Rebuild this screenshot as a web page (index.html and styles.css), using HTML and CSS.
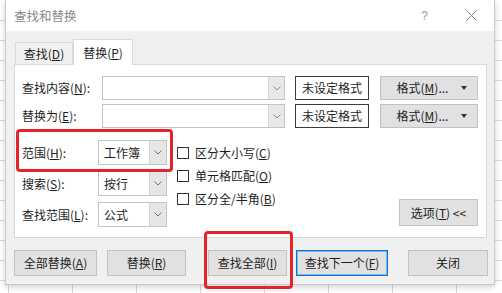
FILE: index.html
```html
<!DOCTYPE html>
<html lang="zh-CN">
<head>
<meta charset="utf-8">
<title>查找和替换</title>
<link rel="stylesheet" href="styles.css">
</head>
<body>
<div class="screen">
  <div class="dialog">
    <div class="titlebar">
      <span class="title">查找和替换</span>
      <span class="help">?</span>
      <span class="close"><svg width="11" height="11" viewBox="0 0 11 11"><path d="M0.5 0.5L10.5 10.5M10.5 0.5L0.5 10.5" stroke="#7a7a7a" stroke-width="1" fill="none"/></svg></span>
    </div>
    <div class="body">
      <div class="tabs">
        <div class="tab">查找(<u>D</u>)</div>
        <div class="tab active">替换(<u>P</u>)</div>
      </div>
      <div class="panel">
        <div class="row">
          <span class="lbl wide">查找内容(<u>N</u>):</span>
          <div class="combo"><span class="field"></span><span class="drop"><svg width="8" height="5" viewBox="0 0 8 5"><polyline points="0.5,0.5 4,4 7.5,0.5" stroke="#8a8a8a" fill="none"/></svg></span></div>
          <div class="fmtbox">未设定格式</div>
          <div class="btn fmt">格式(<u>M</u>)...<span class="tri"></span></div>
        </div>
        <div class="row">
          <span class="lbl wide">替换为(<u>E</u>):</span>
          <div class="combo"><span class="field"></span><span class="drop"><svg width="8" height="5" viewBox="0 0 8 5"><polyline points="0.5,0.5 4,4 7.5,0.5" stroke="#8a8a8a" fill="none"/></svg></span></div>
          <div class="fmtbox">未设定格式</div>
          <div class="btn fmt">格式(<u>M</u>)...<span class="tri"></span></div>
        </div>
        <div class="options">
          <div class="selcol">
            <div class="srow">
              <span class="lbl">范围(<u>H</u>):</span>
              <div class="select"><span class="val">工作簿</span><span class="drop"><svg width="8" height="5" viewBox="0 0 8 5"><polyline points="0.5,0.5 4,4 7.5,0.5" stroke="#707070" fill="none"/></svg></span></div>
            </div>
            <div class="srow">
              <span class="lbl">搜索(<u>S</u>):</span>
              <div class="select"><span class="val">按行</span><span class="drop"><svg width="8" height="5" viewBox="0 0 8 5"><polyline points="0.5,0.5 4,4 7.5,0.5" stroke="#707070" fill="none"/></svg></span></div>
            </div>
            <div class="srow">
              <span class="lbl">查找范围(<u>L</u>):</span>
              <div class="select"><span class="val">公式</span><span class="drop"><svg width="8" height="5" viewBox="0 0 8 5"><polyline points="0.5,0.5 4,4 7.5,0.5" stroke="#707070" fill="none"/></svg></span></div>
            </div>
          </div>
          <div class="checks">
            <div class="check"><span class="box"></span>区分大小写(<u>C</u>)</div>
            <div class="check"><span class="box"></span>单元格匹配(<u>O</u>)</div>
            <div class="check"><span class="box"></span>区分全/半角(<u>B</u>)</div>
          </div>
          <div class="btn opt">选项(<u>T</u>) &lt;&lt;</div>
        </div>
      </div>
      <div class="actions">
        <div class="btn a1">全部替换(<u>A</u>)</div>
        <div class="btn a2">替换(<u>R</u>)</div>
        <div class="btn a3">查找全部(<u>I</u>)</div>
        <div class="btn a4 default">查找下一个(<u>F</u>)</div>
        <div class="btn a5">关闭</div>
      </div>
    </div>
  </div>
  <div class="mark mark1"></div>
  <div class="mark mark2"></div>
</div>
</body>
</html>
```
FILE: styles.css
```css
* { box-sizing: border-box; }
html, body { margin: 0; padding: 0; }
body {
  width: 502px;
  height: 293px;
  overflow: hidden;
  font-family: "Noto Sans CJK SC", "Microsoft YaHei", sans-serif;
  font-size: 12px;
  color: #1e1e1e;
  background-color: #fff;
  background-image:
    repeating-linear-gradient(to bottom, transparent 0, transparent 19px, #dadada 19px, #dadada 20px),
    repeating-linear-gradient(to right, transparent 0, transparent 8px, #dadada 8px, #dadada 9px, transparent 9px, transparent 64px);
  background-size: 100% 100%, 100% 100%;
  background-position: 0 1px, 0 0;
}
u { text-decoration: underline; text-underline-offset: 1px; }

.screen { position: relative; width: 502px; height: 293px; }

.dialog {
  margin-left: 5px;
  width: 490px;
  height: 285px;
  background: #f0f0f0;
  border: 1px solid #c9c9c9;
  border-top: none;
  box-shadow: 0 2px 6px rgba(0,0,0,0.18);
  display: flex;
  flex-direction: column;
}

.titlebar {
  height: 31px;
  background: #fff;
  display: flex;
  align-items: center;
  padding-left: 8px;
  flex: none;
}
.title { font-size: 12.5px; color: #8a8a8a; line-height: 16px; }
.help { margin-left: auto; color: #999; font-size: 12px; font-family: "Liberation Sans", sans-serif; line-height: 14px; }
.close { margin-left: 38px; margin-right: 17px; display: flex; }

.body { padding: 8px 6px 0 8px; display: flex; flex-direction: column; }

.tabs { display: flex; align-items: flex-end; height: 25px; padding-left: 1px; }
.tab {
  width: 58px;
  height: 22px;
  border: 1px solid #d9d9d9;
  border-bottom: none;
  background: #f0f0f0;
  display: flex;
  align-items: center;
  justify-content: center;
  line-height: 16px;
  padding-top: 1px;
}
.tab.active {
  width: 60px;
  height: 26px;
  background: #fff;
  margin-bottom: -1px;
  position: relative;
  z-index: 1;
  padding-top: 0;
}

.panel {
  width: 473px;
  height: 174px;
  background: #fff;
  border: 1px solid #d9d9d9;
  padding: 11px 8px 0 7px;
  display: flex;
  flex-direction: column;
}

.row { display: flex; align-items: center; height: 24px; margin-bottom: 4px; }
.lbl { width: 76px; flex: none; line-height: 16px; }
.lbl.wide { width: 80px; }

.combo {
  width: 183px;
  height: 24px;
  border: 1px solid #c4c4c4;
  display: flex;
}
.field { flex: 1; }
.drop {
  width: 16px;
  background: #e8e8e8;
  border-left: 1px solid #d4d4d4;
  display: flex;
  align-items: center;
  justify-content: center;
}
.fmtbox {
  margin-left: 10px;
  width: 74px;
  height: 24px;
  border: 1px solid #3c3c3c;
  display: flex;
  align-items: center;
  justify-content: center;
  line-height: 16px;
}

.btn {
  background: #e1e1e1;
  border: 1px solid #c2c2c2;
  display: flex;
  align-items: center;
  justify-content: center;
  line-height: 16px;
  color: #1e1e1e;
}
.fmt {
  margin-left: 11px;
  width: 98px;
  height: 24px;
  padding-left: 6px;
  position: relative;
}
.tri {
  margin-left: 13px;
  width: 0;
  height: 0;
  border-left: 3px solid transparent;
  border-right: 3px solid transparent;
  border-top: 4px solid #333;
}

.options { display: flex; margin-top: 8px; }
.selcol { display: flex; flex-direction: column; gap: 6px; }
.srow { display: flex; align-items: center; height: 25px; }
.select {
  width: 69px;
  height: 25px;
  border: 1px solid #c4c4c4;
  display: flex;
}
.val { flex: 1; padding-left: 5px; display: flex; align-items: center; line-height: 16px; }
.select .drop { width: 17px; background: #e6e6e6; }

.checks { margin-left: 10px; display: flex; flex-direction: column; padding-top: 1px; }
.check { height: 23px; display: flex; align-items: center; line-height: 16px; }
.box {
  width: 12px;
  height: 12px;
  border: 1px solid #333;
  background: #fff;
  margin-right: 6px;
}

.opt {
  margin-left: auto;
  align-self: flex-end;
  width: 79px;
  height: 27px;
  margin-bottom: 1px;
}

.actions { display: flex; margin-top: 12px; }
.actions .btn { height: 26px; }
.a1 { width: 83px; }
.a2 { width: 79px; margin-left: 10px; }
.a3 { width: 79px; margin-left: 22px; }
.a4 { width: 92px; margin-left: 9px; }
.a5 { width: 80px; margin-left: 20px; }
.default { border: 1px solid #0078d7; box-shadow: inset 0 0 0 1px #7fb6e6; }

.mark {
  position: absolute;
  border: 3px solid #e3242b;
  border-radius: 4px;
  pointer-events: none;
}
.mark1 { left: 16px; top: 129px; width: 157px; height: 43px; }
.mark2 { left: 204px; top: 231px; width: 89px; height: 58px; }
```
